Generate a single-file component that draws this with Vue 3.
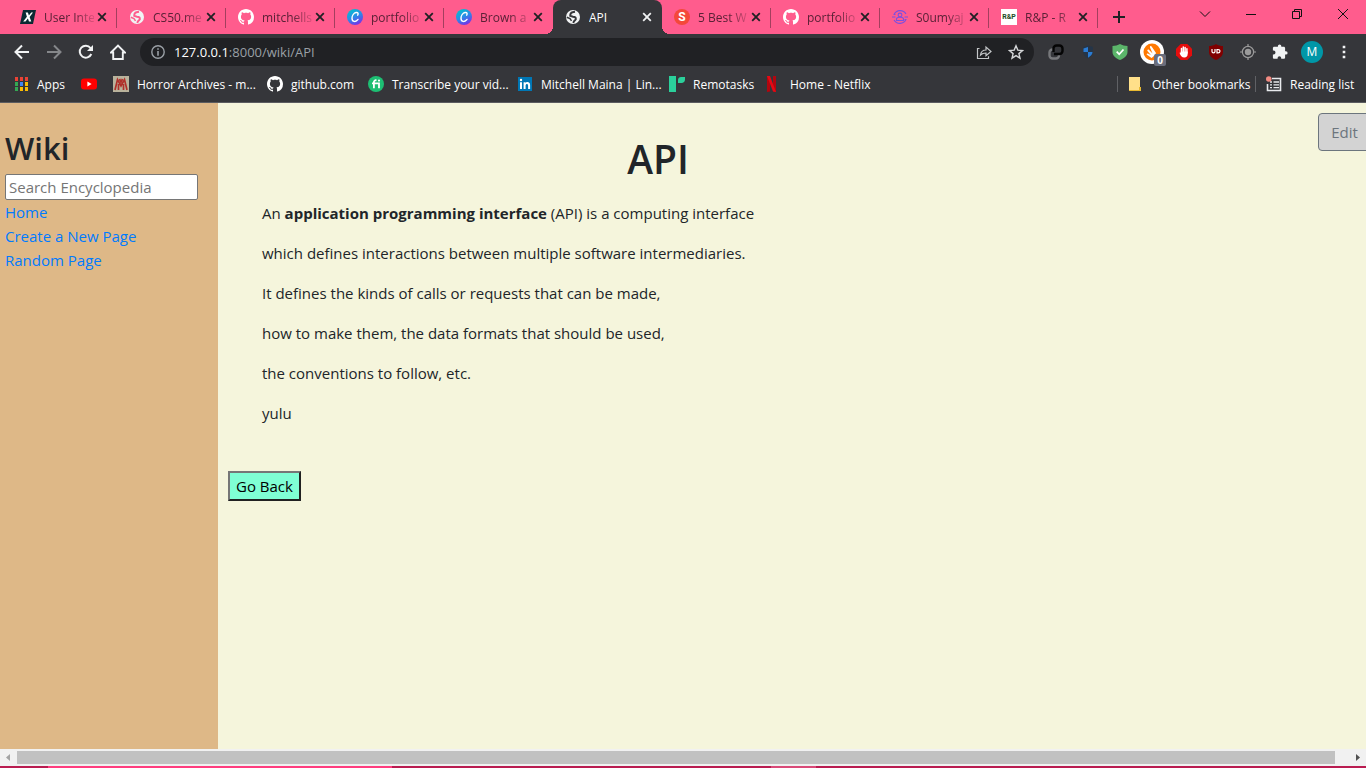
<script setup>
import { ref } from 'vue'

const tabs = [
  { icon: 'ix', title: 'User Inte' },
  { icon: 'globe', title: 'CS50.me' },
  { icon: 'github', title: 'mitchells' },
  { icon: 'canva', title: 'portfolio' },
  { icon: 'canva', title: 'Brown a' },
  { icon: 'globe', title: 'API', active: true },
  { badge: 'S', title: '5 Best W' },
  { icon: 'github', title: 'portfolio' },
  { icon: 'person', title: 'S0umyaj' },
  { badge: 'R&P', title: 'R&P - R' },
]

const bookmarks = [
  { icon: 'apps', title: 'Apps' },
  { icon: 'youtube', title: '', label: 'YouTube' },
  { icon: 'horror', title: 'Horror Archives - m...' },
  { icon: 'github', title: 'github.com' },
  { icon: 'fi', title: 'Transcribe your vid...' },
  { icon: 'linkedin', title: 'Mitchell Maina | Lin...' },
  { icon: 'remotasks', title: 'Remotasks' },
  { icon: 'netflix', title: 'Home - Netflix' },
]

const appColors = ['#ea4335', '#ea4335', '#ea4335', '#34a853', '#4285f4', '#fbbc04', '#34a853', '#fbbc04', '#fbbc04']

const paragraphs = [
  'which defines interactions between multiple software intermediaries.',
  'It defines the kinds of calls or requests that can be made,',
  'how to make them, the data formats that should be used,',
  'the conventions to follow, etc.',
  'yulu',
]

const query = ref('')
</script>

<template>
  <div class="window">
    <svg class="defs" width="0" height="0" aria-hidden="true">
      <defs>
        <linearGradient id="canva-fill" x1="0.2" y1="0" x2="0.7" y2="1">
          <stop offset="0" stop-color="#00c4cc" />
          <stop offset="0.5" stop-color="#2b8be8" />
          <stop offset="1" stop-color="#7d2ae8" />
        </linearGradient>
      </defs>
      <symbol id="i-ix" viewBox="0 0 16 16">
        <path d="M3 1h13l-3 14H0z" fill="#0b2a33" />
        <path d="M5.600 3.600h2.300l1 3 2.300-3H13L9.600 8l1.700 4.400H9L7.900 9.400 5.500 12.400H3.200L6.900 7.800z" fill="#fff" />
      </symbol>
      <symbol id="i-globe" viewBox="0 0 16 16">
        <circle cx="8" cy="8" r="7" fill="#f1f3f4" />
        <path class="land" d="M10 2.800 7.500 3.200C5.500 3.600 5.200 5 5.200 6.800L8 7.700c2.500.2 3 1 2.800 2.600L8.800 12.500 8.300 14" fill="none" stroke-width="1.900" />
        <path class="land" d="M1.800 8.200 5 9.500l1.500 2.300" fill="none" stroke-width="1.500" />
      </symbol>
      <symbol id="i-github" viewBox="0 0 16 16">
        <path fill="#fff" d="M8 0C3.580 0 0 3.580 0 8c0 3.540 2.290 6.530 5.470 7.590.4.070.55-.17.55-.38 0-.19-.01-.82-.01-1.490-2.010.37-2.530-.49-2.690-.94-.09-.23-.48-.94-.82-1.130-.28-.15-.68-.52-.01-.53.63-.01 1.080.58 1.230.82.72 1.210 1.870.87 2.330.66.07-.52.28-.87.51-1.070-1.780-.2-3.640-.89-3.640-3.950 0-.87.31-1.590.82-2.150-.08-.2-.36-1.020.08-2.120 0 0 .67-.21 2.200.82.64-.18 1.320-.27 2-.27s1.360.09 2 .27c1.530-1.040 2.200-.82 2.200-.82.44 1.100.16 1.920.08 2.120.51.56.82 1.270.82 2.150 0 3.070-1.870 3.750-3.650 3.950.29.25.54.73.54 1.480 0 1.070-.01 1.930-.01 2.200 0 .21.15.46.55.38A8 8 0 0 0 16 8c0-4.420-3.580-8-8-8z" />
      </symbol>
      <symbol id="i-canva" viewBox="0 0 16 16">
        <circle cx="8" cy="8" r="8" fill="url(#canva-fill)" />
        <path d="M10.700 6.200c1-1.600.2-3.100-1.600-2.700C6.800 4 5 6.700 5 9.200c0 3.900 3.900 4.200 6 1.200" fill="none" stroke="#fff" stroke-width="1.400" stroke-linecap="round" />
      </symbol>
      <symbol id="i-person" viewBox="0 0 16 16">
        <g fill="none" stroke="#7c4fe0" stroke-width="1.100">
          <path d="M2 5.500A6.800 6.800 0 0 1 14 5M14 10.500A6.800 6.800 0 0 1 2 11M0 8h3.500M12.500 8H16M1.500 5.500h2M12.500 10.500h2" />
          <circle cx="8" cy="6" r="1.900" />
          <path d="M4.500 11.500V10c0-1 1-1.700 3.500-1.700s3.500.7 3.500 1.700v1.500z" />
        </g>
      </symbol>
      <symbol id="i-youtube" viewBox="0 0 16 16">
        <rect y="2.500" width="16" height="11" rx="3" fill="#f00" />
        <path d="M6.400 5.600v4.800L10.600 8z" fill="#fff" />
      </symbol>
      <symbol id="i-horror" viewBox="0 0 16 16">
        <path d="M0 0h16v16H0z" fill="#b9b39c" />
        <path d="M2 14 4.500 3.500 8 10l3.500-6.500L14 14M5.500 14V8M10.500 14V8M6.500 3 8 6l1.500-3" fill="none" stroke="#b0302a" stroke-width="1.700" />
      </symbol>
      <symbol id="i-fi" viewBox="0 0 16 16">
        <circle cx="8" cy="8" r="8" fill="#1dbf73" />
        <path d="M4 7.400h7v4.800M5.900 12.200V6.300c0-1.600 1-2.200 2.600-2" fill="none" stroke="#fff" stroke-width="1.800" />
        <circle cx="11" cy="4.600" r="1.100" fill="#fff" />
      </symbol>
      <symbol id="i-linkedin" viewBox="0 0 16 16">
        <path d="M1 1h14v14H1z" fill="#0077b5" />
        <path d="M3 6.200h2V13H3zM6.600 6.200h1.900v.9c.9-1.500 4.600-1.600 4.600 1.900v4h-2V9.600c0-2.200-2.500-2-2.500 0V13h-2z" fill="#fff" />
        <circle cx="4" cy="4" r="1.200" fill="#fff" />
      </symbol>
      <symbol id="i-remotasks" viewBox="0 0 16 16">
        <path d="M0 0h7v16H0zM9 7V4c0-2 1.500-3 3-3h4v2.500C16 5.500 14.500 7 12.500 7z" fill="#2bd09b" />
      </symbol>
      <symbol id="i-netflix" viewBox="0 0 16 16">
        <path d="M1 0h3v15.600l-3 .4zM7 0h3v16l-3-.4z" fill="#b1060f" />
        <path d="M1 0h3l6 16-3-.4z" fill="#e50914" />
      </symbol>
      <symbol id="i-close" viewBox="0 0 16 16">
        <path d="m4.200 4.200 7.600 7.600M11.800 4.200l-7.600 7.600" stroke="currentColor" stroke-width="1.800" />
      </symbol>
    </svg>

    <header class="browser">
      <div class="strip">
        <nav class="tabs" aria-label="Open tabs">
          <div v-for="(tab, i) in tabs" :key="i" class="tab" :class="{ active: tab.active, before: i === 4 }">
            <svg v-if="tab.icon" class="fav"><use :href="'#i-' + tab.icon" /></svg>
            <span v-else class="badge" :class="{ square: tab.badge.length > 1 }">{{ tab.badge }}</span>
            <span class="tab-title">{{ tab.title }}</span>
            <button class="close" :aria-label="'Close ' + tab.title"><svg class="fav"><use href="#i-close" /></svg></button>
          </div>
        </nav>
        <button class="new-tab" aria-label="New tab">
          <svg width="14" height="14" viewBox="0 0 14 14"><path d="M7 1v12M1 7h12" stroke="#202124" stroke-width="2" /></svg>
        </button>
        <div class="controls">
          <button aria-label="Search tabs"><svg width="12" height="12" viewBox="0 0 12 12"><path d="m1 3.500 5 5 5-5" /></svg></button>
          <button aria-label="Minimize"><svg width="12" height="12" viewBox="0 0 12 12"><path d="M1 6.500h10" /></svg></button>
          <button aria-label="Restore"><svg width="12" height="12" viewBox="0 0 12 12"><path d="M1.500 3.500h7v7h-7zM3.500 3.500v-2h7v7h-2" /></svg></button>
          <button aria-label="Close window"><svg width="12" height="12" viewBox="0 0 12 12"><path d="m1 1 10 10M11 1 1 11" /></svg></button>
        </div>
      </div>

      <div class="toolbar">
        <div class="tools">
          <button aria-label="Back"><svg class="ic" viewBox="0 0 16 16"><path d="M15 8H2M8 1.500 1.500 8 8 14.500" fill="none" stroke="#f1f3f4" stroke-width="2" /></svg></button>
          <button aria-label="Forward"><svg class="ic" viewBox="0 0 16 16"><path d="M1 8h13M8 1.500 14.500 8 8 14.500" fill="none" stroke="#85878a" stroke-width="2" /></svg></button>
          <button aria-label="Reload"><svg class="ic" viewBox="0 0 16 16"><path d="M13.300 10A6 6 0 1 1 12.500 4L13.500 5" fill="none" stroke="#f1f3f4" stroke-width="2" /><path d="M15 1v6H9z" fill="#f1f3f4" /></svg></button>
          <button aria-label="Home"><svg class="ic" viewBox="0 0 16 16"><path d="M1 8.500 8 1.500l7 7h-2.200V15H3.200V8.500z" fill="none" stroke="#f1f3f4" stroke-width="1.900" /></svg></button>
        </div>
        <div class="omnibox">
          <svg class="info" viewBox="0 0 14 14"><circle cx="7" cy="7" r="6.200" fill="none" stroke="#9aa0a6" stroke-width="1.400" /><path d="M7 3.200v1.600M7 6v4.800" stroke="#9aa0a6" stroke-width="1.600" /></svg>
          <a class="url" href="#"><b>127.0.0.1</b>:8000/wiki/API</a>
          <button aria-label="Share"><svg class="ic" viewBox="0 0 16 16"><path d="M3.500 4.500h-2v10h11v-2.300M4.500 11c.5-3.500 2.500-5 5.500-5V3l5 4.500-5 4.300V9C7.500 9 6 9.500 4.500 11z" fill="none" stroke="#c4c7c9" stroke-width="1.200" /></svg></button>
          <button aria-label="Bookmark"><svg class="ic" viewBox="0 0 16 16"><path d="m8 1.800 1.800 4.300 4.700.4-3.600 3.100 1.100 4.600-4-2.500-4 2.500 1.100-4.600-3.600-3.100 4.700-.4z" fill="none" stroke="#d5d7d9" stroke-width="1.400" /></svg></button>
        </div>
        <div class="tools">
          <button aria-label="Link extension"><svg class="ic" viewBox="0 0 16 16"><g fill="none" stroke-width="2.400"><path d="M5.500 5.500h-1a3 3 0 0 0-3 3v3a3 3 0 0 0 3 3H8a3 3 0 0 0 3-3V10" stroke="#77787b" /><path d="M5.500 8V4.500a3 3 0 0 1 3-3h3a3 3 0 0 1 3 3V7a3 3 0 0 1-3 3H6" stroke="#050505" /></g></svg></button>
          <button aria-label="Blue shield"><svg class="ic" viewBox="0 0 16 16"><path d="M8 1.500 3 3v5c0 3 2.500 5 5 6.500 2.500-1.500 5-3.500 5-6.500V3z" fill="#253548" /><path d="M8 3v5H3.500V4.500zM8 8h4.500c0 2.500-2 4.300-4.500 5.800z" fill="#2b7cd3" /></svg></button>
          <button aria-label="Green shield"><svg class="ic" viewBox="0 0 16 16"><path d="M8 0C6 1.200 3 2 .5 2v6c0 4 4 6.800 7.500 8 3.500-1.200 7.500-4 7.500-8V2C13 2 10 1.200 8 0z" fill="#5bb56a" /><path d="m4.700 7.700 2.500 2.600L11.500 5.500" fill="none" stroke="#fff" stroke-width="1.800" /></svg></button>
          <button class="avast" aria-label="Safe browsing"><svg width="24" height="24" viewBox="0 0 24 24"><circle cx="12" cy="12" r="12" fill="#fff" /><circle cx="12" cy="12" r="8.500" fill="#ff7800" /><path d="M14 17 10 7.500c-.5-1.200 1.100-2 1.800-.8L16 13zM12.500 17 7.500 11c-.7-.9.500-2 1.400-1.200L14 15zM11.500 18l-4.500-3.200c-.8-.6 0-1.800.9-1.300l5.600 3z" fill="#fff" /></svg><span class="count">0</span></button>
          <button aria-label="Ad blocker"><svg class="ic" viewBox="0 0 16 16"><path d="M4.700 0h6.600L16 4.700v6.600L11.300 16H4.700L0 11.300V4.700z" fill="#e40d0d" /><path d="M5.500 8.500V4.500M7.300 8V3M9.100 8V3.400M10.900 9V4.700" stroke="#fff" stroke-width="1.500" stroke-linecap="round" /><path d="M4.800 7.500h6.900v2.200c0 2.500-1.200 3.800-3.300 3.800-2.500 0-4-1.700-4.900-4.700l1.300-.2z" fill="#fff" /></svg></button>
          <button aria-label="uBlock"><svg class="ic" viewBox="0 0 16 16"><path d="M8 0C6 1.500 3 2 1 2v6c0 4 3.500 6.500 7 8 3.500-1.500 7-4 7-8V2C13 2 10 1.500 8 0z" fill="#800000" /><path d="M4 5v2.500c0 1.900 3 1.900 3 0V5" fill="none" stroke="#fff" stroke-width="1.200" /><path d="M9 5.500v3.400h1c2.600 0 2.600-3.400 0-3.400z" fill="none" stroke="#fff" stroke-width="1.200" /></svg></button>
          <button aria-label="Locator"><svg class="ic" viewBox="0 0 16 16"><circle cx="8" cy="8" r="3.200" fill="#9b9b9b" /><circle cx="8" cy="8" r="5.600" fill="none" stroke="#9b9b9b" stroke-width="1.200" /><path d="M8 0v3M8 13v3M0 8h3M13 8h3" stroke="#9b9b9b" stroke-width="1.200" /></svg></button>
          <button aria-label="Extensions"><svg class="ic" viewBox="0 0 16 16"><path d="M13.900 7.200h-.8V4.100c0-.8-.6-1.400-1.400-1.400H9.300v-.6a1.700 1.700 0 0 0-3.400 0v.6H2.300C1.500 2.700.9 3.300.9 4.100v2.500h.7a1.900 1.900 0 0 1 0 3.800H.9v3c0 .8.6 1.400 1.400 1.400h3.300v-.7a1.800 1.800 0 0 1 3.600 0v.7h2.500c.8 0 1.400-.6 1.400-1.400v-2.800h.8a1.700 1.700 0 0 0 0-3.400z" fill="#f1f3f4" /></svg></button>
          <button aria-label="Profile"><span class="avatar">M</span></button>
          <button aria-label="Menu"><svg class="ic" viewBox="0 0 16 16"><path d="M6.700 1.700h2.600v2.600H6.700zM6.700 6.700h2.600v2.600H6.700zM6.700 11.700h2.600v2.600H6.700z" fill="#f1f3f4" /></svg></button>
        </div>
      </div>

      <div class="bookbar">
        <nav class="bookmarks" aria-label="Bookmarks">
          <a v-for="mark in bookmarks" :key="mark.icon" href="#" :aria-label="mark.label">
            <svg v-if="mark.icon === 'apps'" class="fav" viewBox="0 0 16 16">
              <rect v-for="(color, n) in appColors" :key="n" :x="2 + (n % 3) * 5" :y="1 + Math.floor(n / 3) * 5" width="3" height="4" :fill="color" />
            </svg>
            <svg v-else class="fav"><use :href="'#i-' + mark.icon" /></svg>
            <span v-if="mark.title">{{ mark.title }}</span>
          </a>
        </nav>
        <nav class="side-marks" aria-label="More bookmarks">
          <a href="#">
            <svg class="fav" viewBox="0 0 16 16"><path d="M1 1h11v10h1v4H1z" fill="#ffe08a" /><path d="M1 14h10v1H1zM11 11h2v4h-2z" fill="#e8b931" /></svg>
            <span>Other bookmarks</span>
          </a>
          <a href="#">
            <svg class="fav" viewBox="0 0 16 16"><path d="M6 2.500h8.500v12h-13V8" fill="none" stroke="#e8eaed" stroke-width="1.600" /><path d="M4 6h2M4 8.800h2M4 11.600h2M7.500 6H13M7.500 8.800H13M7.500 11.600H13" stroke="#e8eaed" stroke-width="1.300" /><circle cx="2.800" cy="3" r="2.800" fill="#f28b82" /></svg>
            <span>Reading list</span>
          </a>
        </nav>
      </div>
    </header>

    <div class="page">
      <aside class="sidebar">
        <h2>Wiki</h2>
        <form @submit.prevent>
          <input v-model="query" type="text" placeholder="Search Encyclopedia" aria-label="Search Encyclopedia" />
        </form>
        <a href="#">Home</a>
        <a href="#">Create a New Page</a>
        <a href="#">Random Page</a>
      </aside>
      <main class="main">
        <button class="edit">Edit</button>
        <h1>API</h1>
        <article>
          <p>An <strong>application programming interface</strong> (API) is a computing interface</p>
          <p v-for="line in paragraphs" :key="line">{{ line }}</p>
        </article>
        <button class="back">Go Back</button>
      </main>
    </div>

    <div class="scrollbar">
      <svg width="17" height="17" viewBox="0 0 17 17"><path d="M10 5v7L6 8.500z" fill="#a3a3a3" /></svg>
      <div class="thumb"></div>
      <svg width="17" height="17" viewBox="0 0 17 17"><path d="M7 5v7l4-3.500z" fill="#505050" /></svg>
    </div>
    <div class="taskbar"><i class="bright"></i><i class="soft"></i></div>
  </div>
</template>

<style>
body {
  margin: 0;
  overflow: hidden;
}
</style>

<style scoped>
.window {
  display: flex;
  flex-direction: column;
  height: 100vh;
  font-family: "Open Sans", "Noto Sans", sans-serif;
  color: #212529;
}
* {
  box-sizing: border-box;
}
.defs {
  position: absolute;
}
button {
  font: inherit;
}
.browser {
  background: #35363a;
  border-bottom: 1px solid #5b5c60;
  font-size: 12px;
}
.browser button {
  border: 0;
  padding: 0;
  background: none;
  display: flex;
  align-items: center;
  justify-content: center;
}
.browser a {
  color: inherit;
  text-decoration: none;
}
.fav,
.ic {
  width: 16px;
  height: 16px;
  flex: none;
  display: block;
}
.strip {
  display: flex;
  height: 34px;
  background: #ff5c8d;
  padding-left: 8px;
}
.tabs {
  display: flex;
  flex: 0 1 1090px;
  min-width: 0;
  max-width: 1090px;
}
.tab {
  position: relative;
  flex: 1 1 0;
  min-width: 0;
  display: flex;
  align-items: center;
  padding: 0 7px 0 12px;
  color: #5a2136;
  --land: #ff5c8d;
}
.tab::after {
  content: "";
  position: absolute;
  right: 0;
  top: 8px;
  width: 1px;
  height: 20px;
  background: #a33f5e;
}
.tab.before::after {
  display: none;
}
.land {
  stroke: var(--land);
}
.badge {
  flex: none;
  width: 16px;
  height: 16px;
  border-radius: 50%;
  background: #f4483a;
  color: #fff;
  font: 700 12px/16px Roboto, sans-serif;
  text-align: center;
}
.badge.square {
  border-radius: 0;
  background: #fff;
  color: #1e4a24;
  font-size: 7px;
}
.tab-title {
  flex: 1;
  min-width: 0;
  margin-left: 8px;
  overflow: hidden;
  white-space: nowrap;
  mask-image: linear-gradient(to right, #000 60%, #0003);
}
.close {
  flex: none;
  color: #202124;
}
.tab.active {
  background: #35363a;
  color: #fff;
  border-radius: 8px 8px 0 0;
  --land: #35363a;
}
.tab.active .tab-title {
  mask-image: none;
}
.tab.active .close {
  color: #f1f3f4;
}
.tab.active::before,
.tab.active::after {
  content: "";
  position: absolute;
  top: auto;
  bottom: 0;
  width: 8px;
  height: 8px;
}
.tab.active::before {
  left: -8px;
  background: radial-gradient(circle at 0 0, transparent 8px, #35363a 8px);
}
.tab.active::after {
  right: -8px;
  background: radial-gradient(circle at 100% 0, transparent 8px, #35363a 8px);
}
.new-tab {
  width: 42px;
}
.controls {
  display: flex;
  height: 28px;
  margin-left: auto;
}
.controls button {
  width: 46px;
}
.controls path {
  fill: none;
  stroke: #111;
}
.toolbar {
  display: flex;
  align-items: center;
  gap: 6px;
  height: 36px;
  padding: 0 6px;
}
.tools {
  display: flex;
}
.tools button,
.omnibox button {
  width: 32px;
  height: 28px;
}
.omnibox {
  flex: 1;
  display: flex;
  align-items: center;
  height: 28px;
  padding: 0 2px 0 11px;
  border-radius: 14px;
  background: #202124;
}
.info {
  width: 14px;
  height: 14px;
}
.browser .url {
  flex: 1;
  margin-left: 9px;
  font-size: 13px;
  color: #9aa0a6;
}
.url b {
  font-weight: 400;
  color: #fff;
}
.avast {
  position: relative;
}
.count {
  position: absolute;
  right: 2px;
  bottom: 0;
  width: 12px;
  height: 12px;
  border-radius: 2px;
  background: #6b6e7c;
  color: #fff;
  font: 700 10px/12px "Open Sans", sans-serif;
}
.avatar {
  width: 22px;
  height: 22px;
  border-radius: 50%;
  background: #0097a7;
  color: #fff;
  line-height: 22px;
}
.bookbar {
  display: flex;
  justify-content: space-between;
  height: 32px;
  padding: 0 11px 4px 13px;
  color: #fff;
}
.bookmarks {
  display: grid;
  grid-template-columns: 68px 32px 154px 101px 149px 152px 97px auto;
}
.bookbar a {
  display: flex;
  align-items: center;
  gap: 8px;
  white-space: nowrap;
}
.side-marks {
  display: grid;
  grid-template-columns: 138px 100px;
  align-items: center;
}
.bookbar .side-marks a {
  height: 16px;
  padding-left: 10px;
  border-left: 1px solid #606165;
}
.page {
  flex: 1;
  min-height: 0;
  display: flex;
  font-size: 15px;
  line-height: 24px;
  overflow: hidden;
}
.sidebar {
  flex: none;
  width: 218px;
  padding: 26px 5px 0;
  background: #deb887;
}
h1,
h2 {
  margin: 0;
  font-weight: 600;
}
h2 {
  font-size: 31px;
  line-height: 38px;
  margin-bottom: 7px;
}
.sidebar input {
  display: block;
  width: 193px;
  height: 26px;
  padding: 1px 3px;
  border: 1px solid #767676;
  border-radius: 2px;
  background: #fff;
  font: inherit;
}
.sidebar input::placeholder {
  color: #757575;
}
.sidebar a {
  display: block;
  color: #007bff;
  text-decoration: none;
}
.main {
  position: relative;
  flex: 1;
  min-width: 0;
  padding: 32px 10px 0;
  background: #f5f5dc;
}
h1 {
  max-width: 860px;
  font-size: 39px;
  line-height: 48px;
  text-align: center;
}
article {
  margin: 18px 34px 46px;
}
p {
  margin: 0 0 16px;
}
.edit {
  position: absolute;
  right: -5px;
  top: 10px;
  width: 53px;
  height: 38px;
  padding: 0;
  border: 1px solid #6c757d;
  border-radius: 4px;
  background: #d3d3d3;
  color: #6c757d;
}
.back {
  padding: 1px 6px;
  border: 2px outset #767676;
  background: #7fffd4;
  color: #000;
}
.scrollbar {
  display: flex;
  height: 17px;
  background: #f1f1f1;
}
.thumb {
  flex: 1;
  margin: 2px 14px 2px 0;
  background: #c1c1c1;
}
.taskbar {
  display: flex;
  height: 2px;
  background: #b91c50;
}
.bright {
  width: 344px;
  margin-left: 48px;
  background: #ff3d7f;
}
.soft {
  width: 45px;
  margin-left: 379px;
  background: #d94a78;
}
</style>
